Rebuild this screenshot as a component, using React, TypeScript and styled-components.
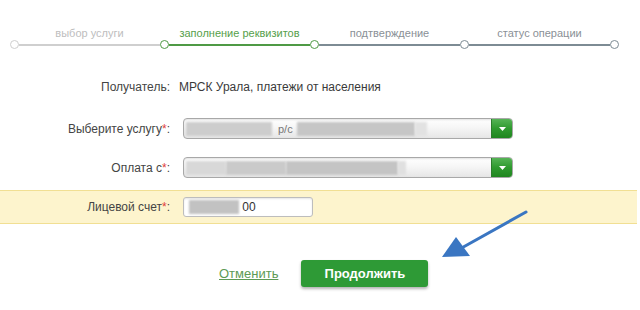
import React from "react";
import styled, { createGlobalStyle } from "styled-components";

const GlobalStyle = createGlobalStyle`
  html, body {
    margin: 0;
    padding: 0;
    background: #fff;
  }
  body {
    font-family: "Liberation Sans", Arial, sans-serif;
    color: #444;
  }
`;

type StepState = "done" | "active" | "next";

const stepColors: Record<StepState, { line: string; text: string }> = {
  done: { line: "#cfcfcf", text: "#bdbdbd" },
  active: { line: "#4f9a45", text: "#56a04b" },
  next: { line: "#7d8b94", text: "#8a9096" },
};

const steps: { title: string; state: StepState }[] = [
  { title: "выбор услуги", state: "done" },
  { title: "заполнение реквизитов", state: "active" },
  { title: "подтверждение", state: "next" },
  { title: "статус операции", state: "next" },
];

const Page = styled.div`
  position: relative;
  width: 640px;
  height: 310px;
  overflow: hidden;
`;

const Stepper = styled.div`
  display: flex;
  align-items: flex-end;
  padding: 27px 0 0 10px;
`;

const Step = styled.div`
  flex: 0 0 150px;
  display: flex;
  flex-direction: column;
`;

const StepLabel = styled.div<{ $state: StepState }>`
  padding-left: 9px;
  height: 12px;
  line-height: 12px;
  margin-bottom: 1px;
  font-size: 11px;
  text-align: center;
  white-space: nowrap;
  color: ${(p) => stepColors[p.$state].text};
`;

const Track = styled.div`
  display: flex;
  align-items: center;
  height: 9px;
`;

const Node = styled.span<{ $color: string }>`
  flex: 0 0 9px;
  height: 9px;
  box-sizing: border-box;
  border: 1.5px solid ${(p) => p.$color};
  border-radius: 50%;
  background: #fff;
`;

const Line = styled.span<{ $color: string }>`
  flex: 1;
  height: 2px;
  background: ${(p) => p.$color};
`;

const Form = styled.div`
  display: flex;
  flex-direction: column;
  margin-top: 29px;
`;

const Row = styled.div<{ $mt: number; $h: number }>`
  display: flex;
  align-items: center;
  margin-top: ${(p) => p.$mt}px;
  height: ${(p) => p.$h}px;
`;

const HighlightRow = styled.div`
  display: flex;
  align-items: center;
  margin-top: 12px;
  width: 637px;
  height: 32px;
  background: #fdf4cd;
  border-top: 1px solid #f1df93;
  border-bottom: 1px solid #f1df93;
`;

const Label = styled.div`
  flex: 0 0 170px;
  text-align: right;
  font-size: 12px;
  color: #444;
  white-space: nowrap;
`;

const Req = styled.span`
  color: #e0413a;
`;

const Value = styled.div`
  margin-left: 9px;
  font-size: 12px;
  color: #3a3a3a;
`;

const Select = styled.div`
  margin-left: 13px;
  width: 330px;
  height: 21px;
  box-sizing: border-box;
  display: flex;
  align-items: stretch;
  border: 1px solid #a8a8a8;
  border-radius: 4px;
  background: linear-gradient(#ffffff 0%, #f6f6f6 45%, #e6e6e6 100%);
  box-shadow: inset 0 1px 2px rgba(0, 0, 0, 0.12);
  overflow: hidden;
`;

const SelectValue = styled.div`
  flex: 1;
  display: flex;
  align-items: center;
  padding-left: 2px;
`;

const Blur = styled.span<{ $w: number; $c: string }>`
  display: inline-block;
  width: ${(p) => p.$w}px;
  height: 14px;
  background: ${(p) => p.$c};
  filter: blur(1.2px);
`;

const Faint = styled.span`
  font-size: 11px;
  color: #777;
  padding: 0 4px 0 6px;
`;

const Arrow = styled.div`
  flex: 0 0 20px;
  display: flex;
  align-items: center;
  justify-content: center;
  background: linear-gradient(#56b456 0%, #2f9a2f 50%, #1f861f 100%);
  border-left: 1px solid #2c7c2c;
`;

const TextInput = styled.div`
  margin-left: 13px;
  width: 130px;
  height: 20px;
  box-sizing: border-box;
  display: flex;
  align-items: center;
  padding-left: 5px;
  border: 1px solid #bdbdbd;
  border-radius: 3px;
  background: #fff;
  box-shadow: inset 0 1px 2px rgba(0, 0, 0, 0.1);
  font-size: 12px;
  color: #333;
`;

const Actions = styled.div`
  display: flex;
  align-items: center;
  gap: 23px;
  margin-top: 36px;
  padding-left: 219px;
`;

const CancelLink = styled.a`
  font-size: 13px;
  color: #5d9a55;
  text-decoration: underline;
  cursor: pointer;
`;

const Primary = styled.button`
  width: 127px;
  height: 27px;
  border: none;
  border-radius: 3px;
  background: #2e9a36;
  color: #fff;
  font-family: "Liberation Sans", Arial, sans-serif;
  font-size: 13px;
  font-weight: bold;
  box-shadow: 0 2px 3px rgba(0, 0, 0, 0.3);
  cursor: pointer;
`;

const Pointer = styled.svg`
  position: absolute;
  left: 0;
  top: 0;
  pointer-events: none;
`;

const Caret = () => (
  <svg width="9" height="6" viewBox="0 0 9 6">
    <path d="M1 1 L4.5 5 L8 1 Z" fill="#fff" />
  </svg>
);

export default function App() {
  return (
    <Page>
      <GlobalStyle />
      <Stepper>
        {steps.map((s, i) => (
          <Step key={s.title}>
            <StepLabel $state={s.state}>{s.title}</StepLabel>
            <Track>
              <Node
                $color={
                  i === 2 ? stepColors.active.line : stepColors[s.state].line
                }
              />
              <Line $color={stepColors[s.state].line} />
            </Track>
          </Step>
        ))}
        <Track>
          <Node $color={stepColors.next.line} />
        </Track>
      </Stepper>

      <Form>
        <Row $mt={0} $h={18}>
          <Label>Получатель:</Label>
          <Value>МРСК Урала, платежи от населения</Value>
        </Row>
        <Row $mt={22} $h={21}>
          <Label>
            Выберите услугу<Req>*</Req>:
          </Label>
          <Select>
            <SelectValue>
              <Blur $w={86} $c="#cdcdcd" />
              <Faint>р/с</Faint>
              <Blur $w={118} $c="#c6c6c6" />
              <Blur $w={12} $c="#e2e2e2" />
            </SelectValue>
            <Arrow>
              <Caret />
            </Arrow>
          </Select>
        </Row>
        <Row $mt={18} $h={21}>
          <Label>
            Оплата с<Req>*</Req>:
          </Label>
          <Select>
            <SelectValue>
              <Blur $w={40} $c="#d8d8d8" />
              <Blur $w={60} $c="#cacaca" />
              <Blur $w={112} $c="#c4c4c4" />
              <Blur $w={8} $c="#e0e0e0" />
            </SelectValue>
            <Arrow>
              <Caret />
            </Arrow>
          </Select>
        </Row>
        <HighlightRow>
          <Label>
            Лицевой счет<Req>*</Req>:
          </Label>
          <TextInput>
            <Blur $w={50} $c="#c2c2c2" />
            <span>&nbsp;00</span>
          </TextInput>
        </HighlightRow>
        <Actions>
          <CancelLink>Отменить</CancelLink>
          <Primary>Продолжить</Primary>
        </Actions>
      </Form>

      <Pointer width="640" height="310" viewBox="0 0 640 310">
        <line
          x1="526"
          y1="212"
          x2="458"
          y2="250"
          stroke="#3a76c2"
          strokeWidth="3"
          strokeLinecap="round"
        />
        <path d="M442 257 L456 237 L470 256 Z" fill="#3a76c2" />
      </Pointer>
    </Page>
  );
}
